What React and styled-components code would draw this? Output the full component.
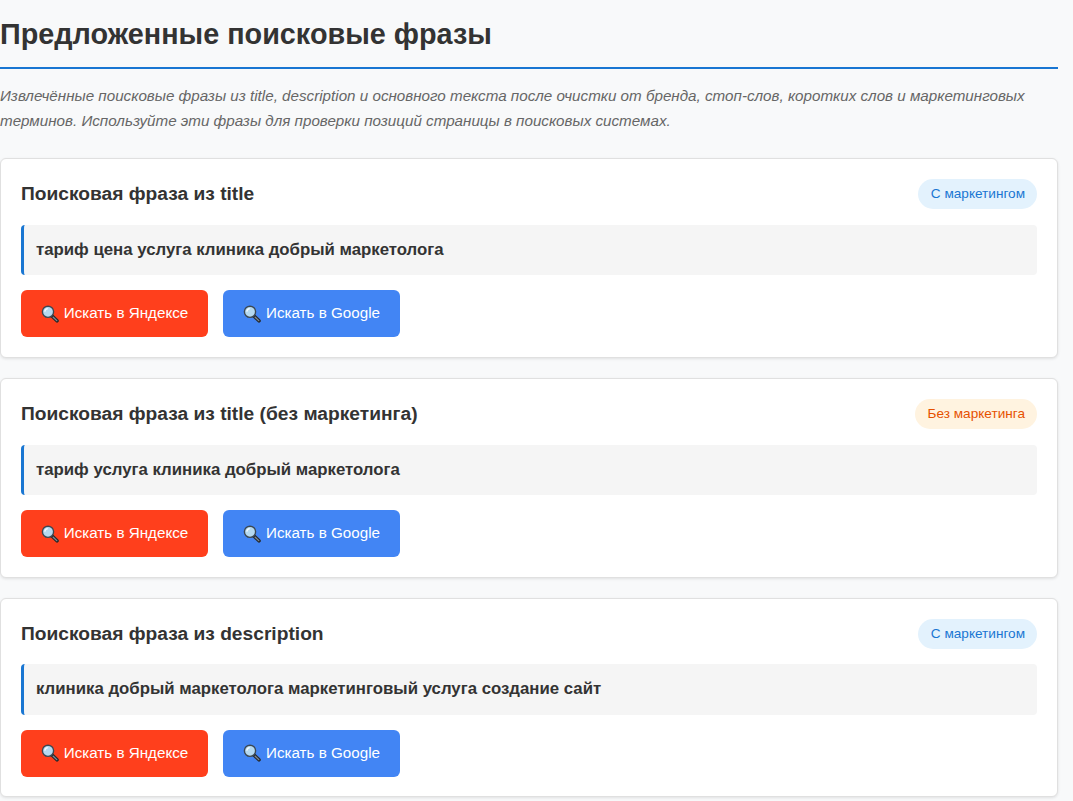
import React from "react";
import styled, { createGlobalStyle } from "styled-components";

const GlobalStyle = createGlobalStyle`
  html, body {
    margin: 0;
    padding: 0;
    background: #f8f9fa;
  }
  body {
    font-family: "Liberation Sans", Arial, sans-serif;
    color: #333;
  }
`;

const phrases = [
  {
    id: 1,
    title: "Поисковая фраза из title",
    badge: "С маркетингом",
    plain: false,
    text: "тариф цена услуга клиника добрый маркетолога",
  },
  {
    id: 2,
    title: "Поисковая фраза из title (без маркетинга)",
    badge: "Без маркетинга",
    plain: true,
    text: "тариф услуга клиника добрый маркетолога",
  },
  {
    id: 3,
    title: "Поисковая фраза из description",
    badge: "С маркетингом",
    plain: false,
    text: "клиника добрый маркетолога маркетинговый услуга создание сайт",
  },
];

const SearchIcon = () => (
  <Glass width="18" height="18" viewBox="0 0 18 18">
    <path d="M11 11 L16 15.8" stroke="#26282b" strokeWidth="3.6" strokeLinecap="round" />
    <path d="M12.2 12.2 L15.8 15.6" stroke="#7d8b97" strokeWidth="1.3" strokeLinecap="round" />
    <circle cx="7" cy="6.8" r="5.6" fill="#b5d9f0" stroke="#3c4852" strokeWidth="1.4" />
    <path d="M3.8 6.6 A3.4 3.4 0 0 1 6.8 3.6" fill="none" stroke="#f2faff" strokeWidth="1.4" />
  </Glass>
);

const App = () => {
  return (
    <Page>
      <GlobalStyle />
      <Heading>Предложенные поисковые фразы</Heading>
      <Intro>
        Извлечённые поисковые фразы из title, description и основного текста после очистки от
        бренда, стоп-слов, коротких слов и маркетинговых терминов. Используйте эти фразы для
        проверки позиций страницы в поисковых системах.
      </Intro>
      <List>
        {phrases.map(item => (
          <Card key={item.id}>
            <CardHeader>
              <CardTitle>{item.title}</CardTitle>
              <Badge $plain={item.plain}>{item.badge}</Badge>
            </CardHeader>
            <Phrase>{item.text}</Phrase>
            <Actions>
              <SearchButton $color="#ff3f1c" $width={187}>
                <SearchIcon />
                Искать в Яндексе
              </SearchButton>
              <SearchButton $color="#4285f4" $width={177}>
                <SearchIcon />
                Искать в Google
              </SearchButton>
            </Actions>
          </Card>
        ))}
      </List>
    </Page>
  );
};

export default App;

const Page = styled.div`
  box-sizing: border-box;
  width: 1073px;
  height: 801px;
  padding: 0 15px 0 0;
  overflow: hidden;
`;
const Heading = styled.h1`
  margin: 0 0 14px;
  padding: 11px 0 10px;
  border-bottom: 2px solid #1976d2;
  font-size: 28.8px;
  line-height: 46px;
  font-weight: 700;
  color: #333;
`;
const Intro = styled.p`
  margin: 0 0 25.3px;
  font-size: 15.2px;
  line-height: 25px;
  font-style: italic;
  color: #666;
`;
const List = styled.div`
  display: flex;
  flex-direction: column;
  gap: 20px;
`;
const Card = styled.section`
  background: #fff;
  border: 1px solid #e0e0e0;
  border-radius: 6px;
  padding: 20px 20px 19.7px;
  box-shadow: 0 1px 3px rgba(0, 0, 0, 0.1);
`;
const CardHeader = styled.div`
  display: flex;
  justify-content: space-between;
  align-items: flex-start;
  margin-bottom: 15px;
`;
const CardTitle = styled.h3`
  margin: 0;
  font-size: 19.2px;
  line-height: 1.6;
  font-weight: 700;
  color: #333;
`;
const Badge = styled.span`
  padding: 0 12px 0 13px;
  border-radius: 15px;
  font-size: 13.6px;
  line-height: 30px;
  background: ${p => (p.$plain ? "#fff3e0" : "#e3f2fd")};
  color: ${p => (p.$plain ? "#e65100" : "#1976d2")};
`;
const Phrase = styled.div`
  margin-bottom: 15px;
  padding: 0 15px 0 12px;
  border-left: 3px solid #1976d2;
  border-radius: 4px;
  background: #f5f5f5;
  font-size: 16.8px;
  line-height: 50.3px;
  font-weight: 700;
  color: #333;
`;
const Actions = styled.div`
  display: flex;
  gap: 15px;
`;
const SearchButton = styled.button`
  display: inline-flex;
  align-items: center;
  justify-content: center;
  gap: 5px;
  box-sizing: border-box;
  width: ${p => p.$width}px;
  height: 47px;
  padding: 0 0 2px;
  border: 0;
  border-radius: 6px;
  background: ${p => p.$color};
  color: #fff;
  font-family: inherit;
  font-size: 15.2px;
`;
const Glass = styled.svg`
  flex: none;
  margin-top: 2px;
`;
